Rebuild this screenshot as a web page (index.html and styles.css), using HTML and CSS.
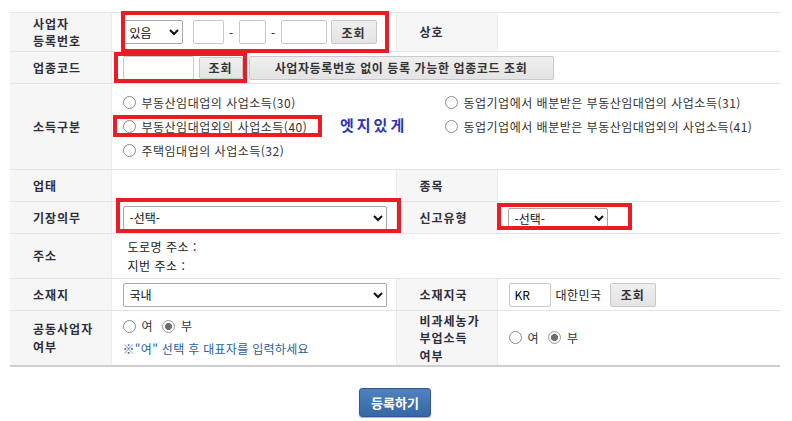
FILE: index.html
```html
<!DOCTYPE html>
<html lang="ko">
<head>
    <meta charset="UTF-8">
    <meta name="viewport" content="width=device-width, initial-scale=1.0">
    <title>사업장 등록</title>
    <link rel="stylesheet" href="styles.css">
</head>
<body>

    <div class="sheet">
        <table class="reg-table">
            <colgroup>
                <col class="col-label">
                <col class="col-value">
                <col class="col-label">
                <col class="col-value2">
            </colgroup>
            <tr class="row-biz">
                <th>사업자<br>등록번호</th>
                <td>
                    <div class="field-line">
                        <select class="sel-small">
                            <option>있음</option>
                            <option>없음</option>
                        </select>
                        <input type="text" class="in-a">
                        <span class="dash">-</span>
                        <input type="text" class="in-b">
                        <span class="dash">-</span>
                        <input type="text" class="in-c">
                        <button class="btn">조회</button>
                    </div>
                </td>
                <th>상호</th>
                <td></td>
            </tr>
            <tr class="row-std">
                <th>업종코드</th>
                <td colspan="3">
                    <div class="field-line">
                        <input type="text" class="in-code">
                        <button class="btn btn-code">조회</button>
                        <button class="btn btn-long">사업자등록번호 없이 등록 가능한 업종코드 조회</button>
                    </div>
                </td>
            </tr>
            <tr class="row-income">
                <th>소득구분</th>
                <td colspan="3">
                    <div class="income-grid">
                        <label class="radio-item"><input type="radio" name="income">부동산임대업의 사업소득(30)</label>
                        <label class="radio-item"><input type="radio" name="income">동업기업에서 배분받은 부동산임대업의 사업소득(31)</label>
                        <label class="radio-item"><input type="radio" name="income">부동산임대업외의 사업소득(40)</label>
                        <label class="radio-item"><input type="radio" name="income">동업기업에서 배분받은 부동산임대업외의 사업소득(41)</label>
                        <label class="radio-item"><input type="radio" name="income">주택임대업의 사업소득(32)</label>
                    </div>
                </td>
            </tr>
            <tr class="row-std">
                <th>업태</th>
                <td></td>
                <th>종목</th>
                <td></td>
            </tr>
            <tr class="row-std">
                <th>기장의무</th>
                <td>
                    <select class="sel-wide">
                        <option>-선택-</option>
                    </select>
                </td>
                <th>신고유형</th>
                <td>
                    <select class="sel-type">
                        <option>-선택-</option>
                    </select>
                </td>
            </tr>
            <tr class="row-addr">
                <th>주소</th>
                <td colspan="3">
                    <div class="addr">
                        <p>도로명 주소 :</p>
                        <p>지번 주소 :</p>
                    </div>
                </td>
            </tr>
            <tr class="row-std">
                <th>소재지</th>
                <td>
                    <select class="sel-wide">
                        <option>국내</option>
                        <option>국외</option>
                    </select>
                </td>
                <th>소재지국</th>
                <td>
                    <div class="field-line">
                        <input type="text" class="in-country" value="KR">
                        <span class="country-name">대한민국</span>
                        <button class="btn">조회</button>
                    </div>
                </td>
            </tr>
            <tr class="row-joint">
                <th>공동사업자<br>여부</th>
                <td>
                    <div class="yn">
                        <label class="radio-item"><input type="radio" name="joint">여</label>
                        <label class="radio-item"><input type="radio" name="joint" checked>부</label>
                    </div>
                    <p class="note">※"여" 선택 후 대표자를 입력하세요</p>
                </td>
                <th>비과세농가<br>부업소득<br>여부</th>
                <td>
                    <div class="yn">
                        <label class="radio-item"><input type="radio" name="farm">여</label>
                        <label class="radio-item"><input type="radio" name="farm" checked>부</label>
                    </div>
                </td>
            </tr>
        </table>

        <div class="actions">
            <button class="btn-submit">등록하기</button>
        </div>

        <!-- 강조 표시 (주석용 빨간 박스) -->
        <span class="mark mark-biz"></span>
        <span class="mark mark-code"></span>
        <span class="mark mark-income"></span>
        <span class="mark mark-duty"></span>
        <span class="mark mark-type"></span>
        <span class="memo">엣지있게</span>
    </div>

</body>
</html>
```

FILE: styles.css
```css
:root {
    --label-bg: #f6f6f6;
    --line: #e4e4e4;
    --line-dark: #cfcfcf;
    --text: #222222;
    --label-text: #2e2e3a;
    --mark: #ec1c24;
    --note: #1f5f9c;
}

* {
    box-sizing: border-box;
}

body {
    margin: 0;
    font-family: 'Noto Sans CJK KR', 'Noto Sans', sans-serif;
    font-size: 11px;
    color: var(--text);
    background: #ffffff;
}

.sheet {
    position: relative;
    width: 792px;
    height: 421px;
    padding: 12px 12px 0 10px;
}

.reg-table {
    width: 770px;
    border-collapse: collapse;
    table-layout: fixed;
    border-top: 1px solid #dadada;
    border-bottom: 2px solid var(--line-dark);
}

.col-label { width: 101px; }
.col-value { width: 285px; }
.col-value2 { width: 283px; }

.reg-table th,
.reg-table td {
    border-top: 1px solid var(--line);
    border-bottom: 1px solid var(--line);
    padding: 0;
    vertical-align: middle;
}

.reg-table th {
    background: var(--label-bg);
    color: var(--label-text);
    font-size: 12px;
    font-weight: 700;
    letter-spacing: 1px;
    text-align: left;
    padding-left: 23px;
    line-height: 17.5px;
    border-left: 1px solid #ececec;
    border-right: 1px solid #ececec;
}

.reg-table tr > th:first-child {
    border-left: none;
}

.reg-table td {
    padding-left: 11px;
}

.row-biz { height: 39px; }
.row-std { height: 32px; }
.row-income { height: 86px; }
.row-addr { height: 45px; }
.row-joint { height: 55px; }

.field-line {
    display: flex;
    align-items: center;
}

select {
    height: 24px;
    border: 1px solid #a9a9a9;
    border-radius: 2px;
    background: #ffffff;
    font-family: inherit;
    font-size: 12px;
    color: #111;
    padding: 0 2px;
}

input[type="text"] {
    height: 24px;
    border: 1px solid #c8c8c8;
    border-radius: 2px;
    font-family: inherit;
    font-size: 12px;
    padding: 0 5px;
}

.sel-small { width: 60px; margin-right: 10px; }
.in-a { width: 31px; }
.in-b { width: 27px; }
.in-c { width: 46px; }
.dash { width: 15px; text-align: center; font-size: 12px; }

.btn {
    width: 46px;
    height: 24px;
    padding: 0;
    border: 1px solid #c9c9c9;
    border-radius: 2px;
    background: linear-gradient(#efefef, #e4e4e4);
    font-family: inherit;
    font-size: 12px;
    font-weight: 700;
    letter-spacing: 1px;
    white-space: nowrap;
    color: #333;
    margin-left: 4px;
    cursor: pointer;
}

.in-code { width: 71px; height: 22px; }
.btn-code { width: 44px; height: 22px; margin-left: 5px; }
.btn-long { height: 24px; margin-left: 6px; width: 305px; letter-spacing: 0.6px; }

.income-grid {
    display: grid;
    grid-template-columns: 322px auto;
    row-gap: 8px;
}

.radio-item {
    display: inline-flex;
    align-items: center;
    font-size: 12px;
    letter-spacing: 0.5px;
    line-height: 16px;
    color: #333;
}

input[type="radio"] {
    appearance: none;
    width: 13px;
    height: 13px;
    margin: 0 6px 0 0;
    border: 1px solid #8a8a8a;
    border-radius: 50%;
    background: #ffffff;
}

input[type="radio"]:checked {
    border-color: #999;
    background: radial-gradient(circle, #6e6e6e 0 3.2px, #ffffff 3.8px);
}

.sel-wide { width: 264px; }

.sel-type {
    width: 100px;
    height: 20px;
    margin-left: -1px;
}

.addr {
    padding-left: 5px;
}

.addr p {
    margin: 0;
    font-size: 12px;
    letter-spacing: 0.5px;
    line-height: 19px;
}

.in-country { width: 42px; margin-right: 5px; }
.country-name { font-size: 12px; letter-spacing: 0.5px; margin-right: 4px; }

.yn {
    display: flex;
    gap: 9px;
}

.note {
    margin: 6px 0 0;
    color: var(--note);
    font-size: 12px;
    letter-spacing: 0.3px;
}

.actions {
    display: flex;
    justify-content: center;
    padding-top: 21px;
}

.btn-submit {
    width: 72px;
    height: 29px;
    border: 1px solid #2f5a94;
    border-radius: 3px;
    background: linear-gradient(#4f82bf, #3767a5);
    color: #ffffff;
    font-family: inherit;
    font-size: 13px;
    font-weight: 700;
    box-shadow: 0 1px 1px rgba(0, 0, 0, 0.3);
    cursor: pointer;
}

.mark {
    position: absolute;
    border: 4px solid var(--mark);
    pointer-events: none;
}

.mark-biz { left: 121px; top: 11px; width: 268px; height: 42px; }
.mark-code { left: 114px; top: 52px; width: 133px; height: 31px; }
.mark-income { left: 113px; top: 115px; width: 209px; height: 22px; }
.mark-duty { left: 116px; top: 198px; width: 285px; height: 35px; }
.mark-type { left: 497px; top: 203px; width: 135px; height: 27px; }

.memo {
    position: absolute;
    left: 340px;
    top: 114px;
    color: #2b36b3;
    font-size: 15px;
    font-weight: 700;
    letter-spacing: 3px;
}
```
